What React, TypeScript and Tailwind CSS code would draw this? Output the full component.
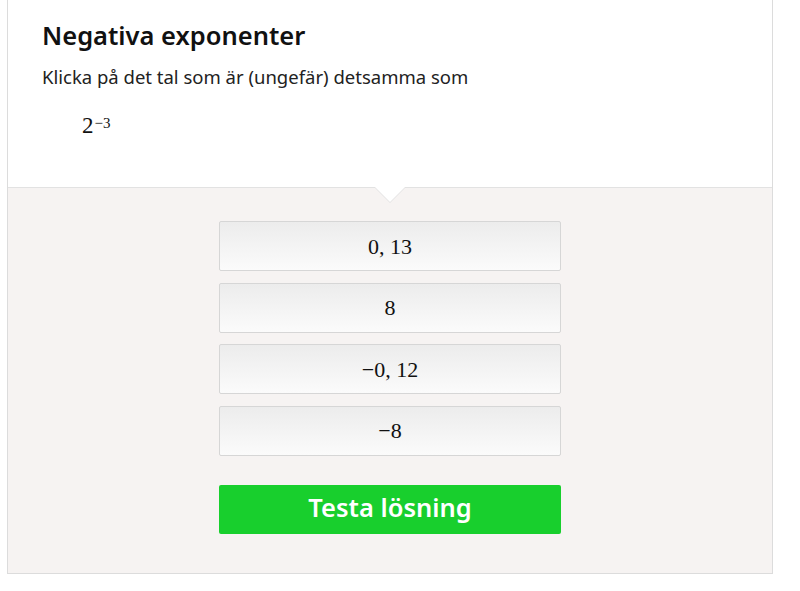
import React, { useState } from 'react';

const OPTIONS = [
  { key: 'a', label: '0, 13' },
  { key: 'b', label: '8' },
  { key: 'c', label: '\u22120, 12' },
  { key: 'd', label: '\u22128' },
];

const App: React.FC = () => {
  const [picked, setPicked] = useState<string | null>(null);

  return (
    <div className="w-[800px] h-[591px] bg-white overflow-hidden font-['Noto_Sans',sans-serif]">
      <div className="ml-[7px] w-[766px] border-x border-b border-[#dcdcdc]">
        {/* question header */}
        <div className="relative bg-white pl-[34px] pt-[19px] h-[188px] border-b border-[#e2e2e2]">
          <h1 className="text-[25.5px] leading-[32px] font-semibold text-[#111]">Negativa exponenter</h1>
          <p className="mt-[14px] text-[18.5px] leading-[24px] text-[#222]">
            Klicka på det tal som är (ungefär) detsamma som
          </p>
          <div className="mt-[25px] ml-[40px] font-['Liberation_Serif',serif] text-[23px] text-[#111] leading-none">
            2<sup className="text-[15px] relative -top-[5px] ml-[1px]">{'\u22123'}</sup>
          </div>
          <div className="absolute left-1/2 -translate-x-1/2 -bottom-[16px] w-0 h-0 border-x-[16px] border-x-transparent border-t-[16px] border-t-[#e2e2e2]" />
          <div className="absolute left-1/2 -translate-x-1/2 -bottom-[15px] w-0 h-0 border-x-[15px] border-x-transparent border-t-[15px] border-t-white" />
        </div>

        {/* answers */}
        <div className="bg-[#f6f3f2] pt-[33px] pb-[39px] flex flex-col items-center">
          <div className="flex flex-col gap-[11.5px] w-[342px]">
            {OPTIONS.map(o => (
              <button
                key={o.key}
                onClick={() => setPicked(o.key)}
                className={`h-[50px] w-full rounded-[2px] border bg-gradient-to-b from-[#ececec] to-[#fbfbfb] font-['Liberation_Serif',serif] text-[22px] text-[#111] ${picked === o.key ? 'border-[#7a9cd8]' : 'border-[#d6d6d6]'}`}
              >
                {o.label}
              </button>
            ))}
          </div>
          <button className="mt-[29px] w-[342px] h-[49px] rounded-[2px] bg-[#18cf2d] text-white text-[25.5px] leading-none font-semibold pb-[3px]">
            Testa lösning
          </button>
        </div>
      </div>
    </div>
  );
};

export default App;
